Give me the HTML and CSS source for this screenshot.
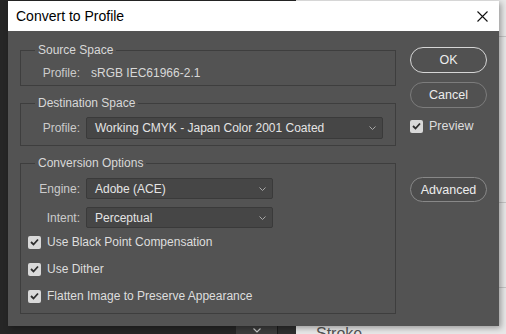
FILE: index.html
```html
<!DOCTYPE html>
<html lang="en">
<head>
    <meta charset="UTF-8">
    <meta name="viewport" content="width=device-width, initial-scale=1.0">
    <title>Convert to Profile</title>
    <link rel="stylesheet" href="styles.css">
</head>
<body>
    <div class="screen">
        <!-- workspace behind the dialog -->
        <div class="panel-dark">
            <div class="dock">
                <span class="dock-gap"></span>
                <span class="dock-btn">
                    <svg width="8" height="5" viewBox="0 0 8 5"><path d="M0.5 0.5 L4 4 L7.5 0.5" fill="none" stroke="#c8c8c8" stroke-width="1.2"/></svg>
                </span>
                <span class="dock-sep"></span>
            </div>
        </div>
        <div class="panel-light">
            <div class="rule rule-1"></div>
            <div class="rule rule-2"></div>
            <div class="rule rule-3"></div>
            <div class="stroke-label">Stroke</div>
        </div>

        <!-- Dialog -->
        <div class="dialog">
            <div class="titlebar">
                <span class="title">Convert to Profile</span>
                <svg class="close" width="11" height="11" viewBox="0 0 11 11"><path d="M0.5 0.5 L10.5 10.5 M10.5 0.5 L0.5 10.5" stroke="#111" stroke-width="1.1"/></svg>
            </div>
            <div class="dialog-body">
                <div class="groups">
                    <fieldset class="group group-source">
                        <legend>Source Space</legend>
                        <div class="field">
                            <span class="field-label">Profile:</span>
                            <span class="field-value">sRGB IEC61966-2.1</span>
                        </div>
                    </fieldset>

                    <fieldset class="group group-dest">
                        <legend>Destination Space</legend>
                        <div class="field">
                            <span class="field-label">Profile:</span>
                            <div class="select select-wide">
                                <span>Working CMYK - Japan Color 2001 Coated</span>
                                <svg width="7" height="4" viewBox="0 0 7 4"><path d="M0.5 0.5 L3.5 3.5 L6.5 0.5" fill="none" stroke="#a8a8a8" stroke-width="1"/></svg>
                            </div>
                        </div>
                    </fieldset>

                    <fieldset class="group group-conv">
                        <legend>Conversion Options</legend>
                        <div class="field">
                            <span class="field-label">Engine:</span>
                            <div class="select select-short">
                                <span>Adobe (ACE)</span>
                                <svg width="7" height="4" viewBox="0 0 7 4"><path d="M0.5 0.5 L3.5 3.5 L6.5 0.5" fill="none" stroke="#a8a8a8" stroke-width="1"/></svg>
                            </div>
                        </div>
                        <div class="field field-next">
                            <span class="field-label">Intent:</span>
                            <div class="select select-short">
                                <span>Perceptual</span>
                                <svg width="7" height="4" viewBox="0 0 7 4"><path d="M0.5 0.5 L3.5 3.5 L6.5 0.5" fill="none" stroke="#a8a8a8" stroke-width="1"/></svg>
                            </div>
                        </div>
                        <div class="checks">
                            <label class="check">
                                <span class="box"><svg width="9" height="8" viewBox="0 0 9 8"><path d="M1 4 L3.5 6.5 L8 1.5" fill="none" stroke="#2e2e2e" stroke-width="1.8"/></svg></span>
                                Use Black Point Compensation
                            </label>
                            <label class="check">
                                <span class="box"><svg width="9" height="8" viewBox="0 0 9 8"><path d="M1 4 L3.5 6.5 L8 1.5" fill="none" stroke="#2e2e2e" stroke-width="1.8"/></svg></span>
                                Use Dither
                            </label>
                            <label class="check">
                                <span class="box"><svg width="9" height="8" viewBox="0 0 9 8"><path d="M1 4 L3.5 6.5 L8 1.5" fill="none" stroke="#2e2e2e" stroke-width="1.8"/></svg></span>
                                Flatten Image to Preserve Appearance
                            </label>
                        </div>
                    </fieldset>
                </div>

                <div class="actions">
                    <button class="btn btn-default">OK</button>
                    <button class="btn btn-cancel">Cancel</button>
                    <label class="check check-preview">
                        <span class="box"><svg width="9" height="8" viewBox="0 0 9 8"><path d="M1 4 L3.5 6.5 L8 1.5" fill="none" stroke="#2e2e2e" stroke-width="1.8"/></svg></span>
                        Preview
                    </label>
                    <button class="btn btn-advanced">Advanced</button>
                </div>
            </div>
        </div>
    </div>
</body>
</html>
```

FILE: styles.css
```css
body {
    margin: 0;
    background: #262626;
    font-family: "Liberation Sans", Arial, sans-serif;
}

.screen {
    position: relative;
    width: 506px;
    height: 334px;
    overflow: hidden;
    display: flex;
}

/* background workspace */
.panel-dark {
    width: 296px;
    background: #262626;
    display: flex;
    flex-direction: column;
    justify-content: flex-end;
}

.dock {
    height: 8px;
    display: flex;
}

.dock-gap {
    width: 236px;
}

.dock-btn {
    width: 41px;
    background: #3c3c3c;
    display: flex;
    justify-content: center;
    padding-top: 2px;
    box-sizing: border-box;
}

.dock-sep {
    flex: 1;
    background: #2f2f2f;
    border-left: 1px solid #1c1c1c;
}

.panel-light {
    flex: 1;
    background: #e8e8e8;
    display: flex;
    flex-direction: column;
}

.rule {
    border-bottom: 1px solid #c6c6c6;
}

.rule-1 { height: 36px; }
.rule-2 { height: 165px; }
.rule-3 { height: 84px; }

.stroke-label {
    margin-top: auto;
    margin-bottom: -8px;
    padding-left: 20px;
    font-size: 16px;
    line-height: 17px;
    color: #555;
}

/* dialog */
.dialog {
    position: absolute;
    left: 8px;
    top: 1px;
    width: 491px;
    box-shadow: 2px 2px 6px rgba(0, 0, 0, 0.35);
}

.titlebar {
    height: 30px;
    background: #fff;
    display: flex;
    align-items: center;
    justify-content: space-between;
    padding: 0 11px 0 8px;
}

.title {
    font-size: 14px;
    color: #000;
}

.dialog-body {
    height: 295px;
    box-sizing: border-box;
    background: #535353;
    padding: 12px 12px 0;
    display: grid;
    grid-template-columns: 376px 77px;
    column-gap: 14px;
    align-items: start;
}

.group {
    margin: 0 0 10px;
    padding: 0;
    border: 1px solid #3e3e3e;
    min-width: 0;
}

.group legend {
    margin-left: 14px;
    padding: 0 3px;
    font-size: 12px;
    line-height: 14px;
    color: #d8d8d8;
}

.group-source { padding: 8px 0 4px; }
.group-dest { padding: 7px 0 6px; }
.group-conv { padding: 8px 0 7px; }

.field {
    display: flex;
    align-items: center;
    gap: 6px;
    font-size: 12px;
    line-height: 16px;
}

.field-next {
    margin-top: 8px;
}

.field-label {
    width: 59px;
    text-align: right;
    color: #cbcbcb;
}

.field-value {
    margin-left: 5px;
    color: #d8d8d8;
}

.select {
    display: flex;
    align-items: center;
    justify-content: space-between;
    box-sizing: border-box;
    padding: 0 6px 0 8px;
    background: #464646;
    border: 1px solid #3a3a3a;
    border-radius: 2px;
    color: #e4e4e4;
}

.select-wide {
    width: 297px;
    height: 22px;
}

.select-short {
    width: 187px;
    height: 21px;
}

.checks {
    margin-top: 4px;
    display: flex;
    flex-direction: column;
    gap: 7px;
}

.check {
    display: flex;
    align-items: center;
    gap: 6px;
    height: 20px;
    margin-left: 7px;
    font-size: 12px;
    color: #dedede;
}

.box {
    width: 13px;
    height: 13px;
    border-radius: 2px;
    background: #d9d9d9;
    display: flex;
    align-items: center;
    justify-content: center;
}

/* buttons column */
.actions {
    margin-top: 4px;
    display: flex;
    flex-direction: column;
}

.btn {
    height: 26px;
    box-sizing: border-box;
    border: 1.5px solid #7c7c7c;
    border-radius: 13px;
    background: #515151;
    color: #ededed;
    font-family: inherit;
    font-size: 12.5px;
    padding: 0;
}

.btn-default {
    border-color: #d6d6d6;
}

.btn-cancel {
    margin-top: 9px;
}

.check-preview {
    margin: 8px 0 0;
    font-size: 12.5px;
}

.btn-advanced {
    margin-top: 41px;
    height: 25px;
    border-color: #888;
    background: #4d4d4d;
}
```
